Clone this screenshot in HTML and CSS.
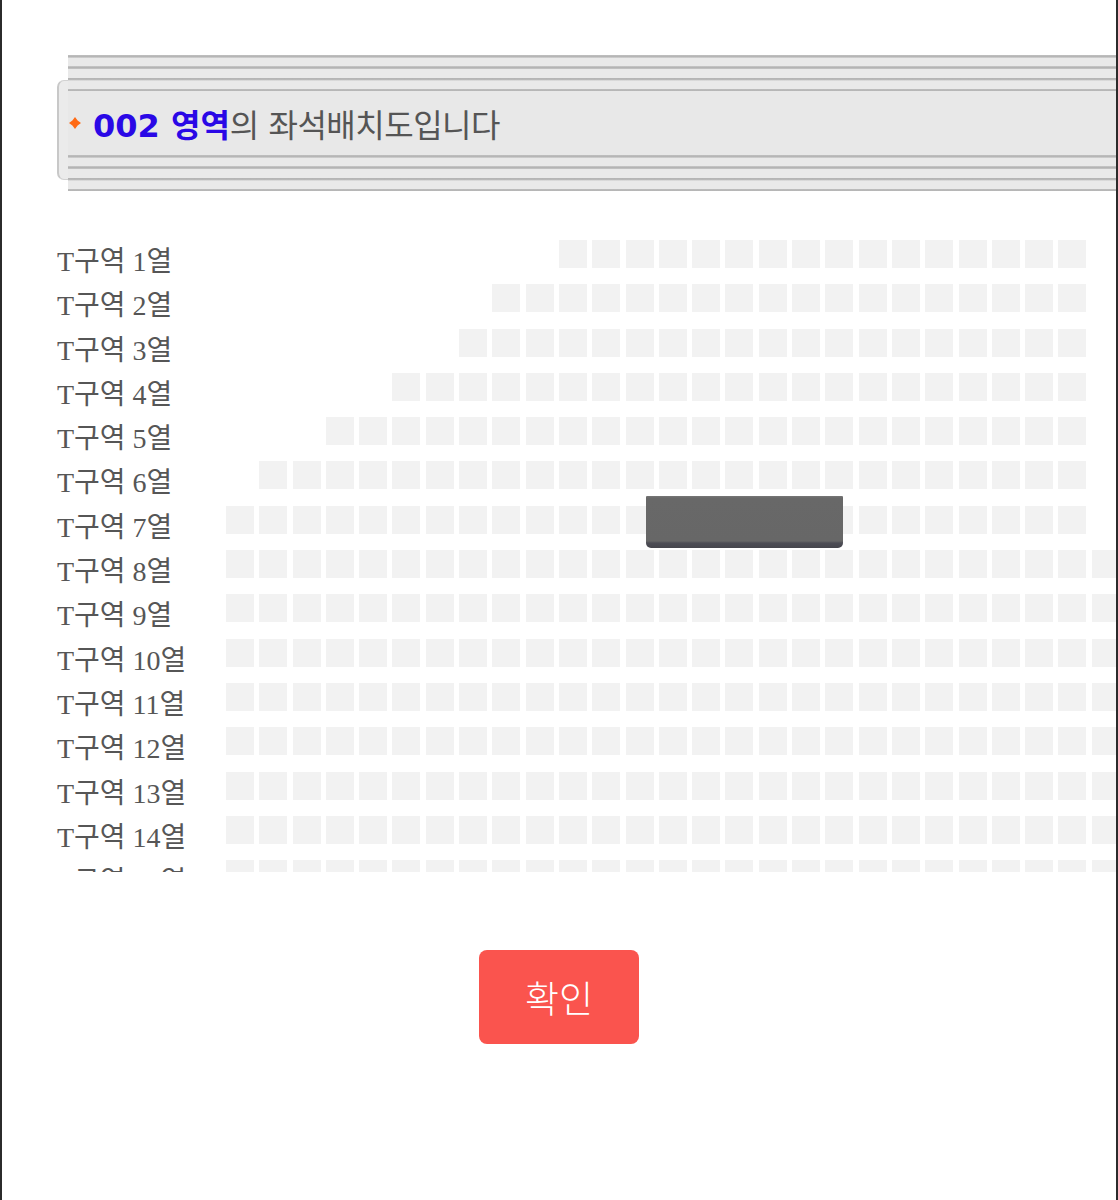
FILE: index.html
```html
<!DOCTYPE html>
<html lang="ko">
<head>
    <meta charset="UTF-8">
    <title>좌석배치도</title>
    <link rel="stylesheet" href="styles.css">
</head>
<body>
    <div class="page">
        <div class="zone-head">
            <div class="zone-head-cap"></div>
            <div class="zone-head-bar">
                <div class="zone-head-lines"></div>
                <h2 class="zone-title">
                    <svg class="bullet" width="12" height="12" viewBox="0 0 12 12">
                        <path d="M6 0 L8.6 3.4 L12 6 L8.6 8.6 L6 12 L3.4 8.6 L0 6 L3.4 3.4 Z" fill="#ff6a14"/>
                    </svg>
                    <strong class="zone-no">002 영역</strong><span class="zone-desc">의 좌석배치도입니다</span>
                </h2>
                <div class="zone-head-lines"></div>
            </div>
        </div>

        <div class="seat-map" id="seat-map">
            <div class="stage"></div>
        </div>

        <div class="actions">
            <button type="button" class="btn-confirm">확인</button>
        </div>
    </div>

    <script src="seats.js"></script>
</body>
</html>
```

FILE: styles.css
```css
body {
    margin: 0;
    background: #ffffff;
}

.page {
    box-sizing: border-box;
    width: 1118px;
    min-height: 1200px;
    border-left: 2px solid #2b2b2b;
    border-right: 2px solid #2b2b2b;
    padding-top: 55px;
    overflow: hidden;
}

/* striped section header */
.zone-head {
    display: flex;
    margin-left: 55px;
}

.zone-head-cap {
    box-sizing: border-box;
    width: 11px;
    height: 100px;
    margin-top: 25px;
    background: #ebebeb;
    border: 1px solid #d2d2d2;
    border-left: 2px solid #c8c8c8;
    border-right: none;
    border-radius: 7px 0 0 7px;
}

.zone-head-bar {
    flex: 1;
    background: #e8e8e8;
}

.zone-head-lines {
    height: 36px;
    background: repeating-linear-gradient(
        to bottom,
        #c6c6c6 0,
        #b3b3b3 1px,
        #b9b9b9 2px,
        #dcdcdc 3px,
        #e9e9e9 3px,
        #e9e9e9 11.3px
    );
}

.zone-title {
    display: flex;
    align-items: center;
    height: 64px;
    margin: 0;
    padding-left: 1px;
    font-family: "DejaVu Sans", "Noto Sans CJK KR", sans-serif;
    font-size: 32px;
    font-weight: normal;
    color: #555555;
    white-space: nowrap;
}

.bullet {
    margin-right: 12px;
    flex-shrink: 0;
}

.zone-no {
    color: #2a08e6;
    font-weight: bold;
}

.zone-desc {
    letter-spacing: -0.5px;
}

/* seat rows */
.seat-map {
    position: relative;
    height: 632px;
    margin-top: 49px;
    overflow: hidden;
}

.seat-row {
    display: flex;
    align-items: flex-start;
    height: 44.3px;
}

.row-label {
    box-sizing: border-box;
    flex-shrink: 0;
    width: 224px;
    padding-left: 55px;
    line-height: 44.3px;
    font-family: "Liberation Serif", "Noto Sans CJK KR", serif;
    font-size: 28px;
    color: #565656;
    white-space: nowrap;
}

.row-seats {
    display: flex;
    gap: 5.3px;
}

.seat {
    flex-shrink: 0;
    width: 28px;
    height: 28px;
    background: #f2f2f2;
}

.seat.is-empty {
    visibility: hidden;
}

.stage {
    position: absolute;
    left: 644px;
    top: 256px;
    width: 197px;
    height: 52px;
    box-sizing: border-box;
    background: linear-gradient(to bottom, #777777 0, #686868 2px, #676767 45px, #4d4d55 47px, #45454c 52px);
    border-radius: 1px 1px 5px 5px;
}

/* confirm button */
.actions {
    display: flex;
    justify-content: center;
    margin-top: 78px;
}

.btn-confirm {
    width: 160px;
    height: 94px;
    border: none;
    border-radius: 8px;
    background: #fa544e;
    color: #ffffff;
    font-family: "Noto Sans CJK KR", sans-serif;
    font-size: 37px;
    font-weight: 300;
    cursor: pointer;
}
```

FILE: seats.js
```javascript
// [first column, column count] for each row of the T zone
var rows = [
    [10, 26], [8, 26], [7, 26], [5, 26], [3, 26], [1, 26], [0, 26],
    [0, 30], [0, 30], [0, 30], [0, 30], [0, 30], [0, 30], [0, 30], [0, 30]
];

var map = document.getElementById('seat-map');

rows.forEach(function (row, i) {
    var line = document.createElement('div');
    line.className = 'seat-row';

    var label = document.createElement('div');
    label.className = 'row-label';
    label.textContent = 'T구역 ' + (i + 1) + '열';
    line.appendChild(label);

    var seats = document.createElement('div');
    seats.className = 'row-seats';
    for (var k = 0; k < row[1]; k++) {
        var seat = document.createElement('span');
        seat.className = k < row[0] ? 'seat is-empty' : 'seat';
        seats.appendChild(seat);
    }
    line.appendChild(seats);

    map.insertBefore(line, map.lastElementChild);
});
```
